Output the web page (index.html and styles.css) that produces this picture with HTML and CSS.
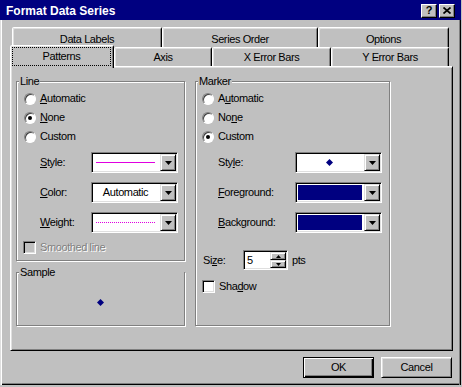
FILE: index.html
```html
<!DOCTYPE html>
<html lang="en">
<head>
    <meta charset="UTF-8">
    <title>Format Data Series</title>
    <link rel="stylesheet" href="styles.css">
</head>
<body>
    <div class="window">
        <div class="titlebar">
            <span class="title">Format Data Series</span>
            <div class="caption-buttons">
                <span class="cap-btn">?</span>
                <span class="cap-btn">
                    <svg width="8" height="7" viewBox="0 0 8 7"><path d="M0.5 0.5L7.5 6.5M7.5 0.5L0.5 6.5" stroke="#000" stroke-width="1.7"/></svg>
                </span>
            </div>
        </div>

        <div class="client">
            <div class="tab-row back">
                <div class="tab w-labels">Data Labels</div>
                <div class="tab w-order">Series Order</div>
                <div class="tab w-options">Options</div>
            </div>
            <div class="tab-row front">
                <div class="tab active w-patterns"><span class="focus">Patterns</span></div>
                <div class="tab w-axis">Axis</div>
                <div class="tab w-xerr">X Error Bars</div>
                <div class="tab w-yerr">Y Error Bars</div>
            </div>

            <div class="panel">
                <div class="col">
                    <div class="group line-group">
                        <span class="group-title">Line</span>
                        <div class="radios">
                            <div class="opt"><span class="radio"></span><u>A</u>utomatic</div>
                            <div class="opt"><span class="radio checked"></span><u>N</u>one</div>
                            <div class="opt"><span class="radio"></span>Custom</div>
                        </div>
                        <div class="fields line-fields">
                            <span><u>S</u>tyle:</span>
                            <div class="combo">
                                <div class="field"><span class="solid-line"></span></div>
                                <span class="drop"><svg width="7" height="4" viewBox="0 0 7 4"><path d="M0 0H7L3.5 4Z"/></svg></span>
                            </div>
                            <span><u>C</u>olor:</span>
                            <div class="combo">
                                <div class="field">Automatic</div>
                                <span class="drop"><svg width="7" height="4" viewBox="0 0 7 4"><path d="M0 0H7L3.5 4Z"/></svg></span>
                            </div>
                            <span><u>W</u>eight:</span>
                            <div class="combo">
                                <div class="field"><span class="dot-line"></span></div>
                                <span class="drop"><svg width="7" height="4" viewBox="0 0 7 4"><path d="M0 0H7L3.5 4Z"/></svg></span>
                            </div>
                        </div>
                        <div class="check-row disabled"><span class="check"></span>Smoothed line</div>
                    </div>

                    <div class="group sample-group">
                        <span class="group-title">Sample</span>
                        <div class="sample-area">
                            <svg width="7" height="7" viewBox="0 0 7 7"><path d="M3.5 0L7 3.5L3.5 7L0 3.5Z" fill="#000080"/></svg>
                        </div>
                    </div>
                </div>

                <div class="group marker-group">
                    <span class="group-title">Marker</span>
                    <div class="radios marker-radios">
                        <div class="opt"><span class="radio"></span>A<u>u</u>tomatic</div>
                        <div class="opt"><span class="radio"></span>No<u>n</u>e</div>
                        <div class="opt"><span class="radio checked"></span>Custom</div>
                    </div>
                    <div class="fields marker-fields">
                        <span>Sty<u>l</u>e:</span>
                        <div class="combo">
                            <div class="field">
                                <svg width="7" height="7" viewBox="0 0 7 7"><path d="M3.5 0L7 3.5L3.5 7L0 3.5Z" fill="#000080"/></svg>
                            </div>
                            <span class="drop"><svg width="7" height="4" viewBox="0 0 7 4"><path d="M0 0H7L3.5 4Z"/></svg></span>
                        </div>
                        <span><u>F</u>oreground:</span>
                        <div class="combo">
                            <div class="field"><span class="swatch"></span></div>
                            <span class="drop"><svg width="7" height="4" viewBox="0 0 7 4"><path d="M0 0H7L3.5 4Z"/></svg></span>
                        </div>
                        <span><u>B</u>ackground:</span>
                        <div class="combo">
                            <div class="field"><span class="swatch"></span></div>
                            <span class="drop"><svg width="7" height="4" viewBox="0 0 7 4"><path d="M0 0H7L3.5 4Z"/></svg></span>
                        </div>
                    </div>
                    <div class="size-row">
                        <span class="size-label">Si<u>z</u>e:</span>
                        <div class="spin">
                            <span class="spin-val">5</span>
                            <span class="spin-btns">
                                <span class="spin-btn"><svg width="5" height="3" viewBox="0 0 5 3"><path d="M2.5 0L5 3H0Z"/></svg></span>
                                <span class="spin-btn"><svg width="5" height="3" viewBox="0 0 5 3"><path d="M0 0H5L2.5 3Z"/></svg></span>
                            </span>
                        </div>
                        <span class="pts">pts</span>
                    </div>
                    <div class="check-row shadow-row"><span class="check"></span>Sha<u>d</u>ow</div>
                </div>
            </div>

            <div class="buttons">
                <button class="btn default">OK</button>
                <button class="btn">Cancel</button>
            </div>
        </div>
    </div>
</body>
</html>
```

FILE: styles.css
```css
* {
    box-sizing: border-box;
}
body {
    margin: 0;
    background-color: #c0c0c0;
    font-family: "Liberation Sans", Arial, sans-serif;
    font-size: 11px;
    line-height: 13px;
    letter-spacing: -0.4px;
    color: #000;
}
u {
    text-decoration-thickness: 1px;
    text-underline-offset: 1px;
}
.window {
    width: 461px;
    height: 385px;
    display: flex;
    flex-direction: column;
}
.titlebar {
    height: 20px;
    background-color: #000080;
    color: #fff;
    display: flex;
    align-items: center;
    justify-content: space-between;
    padding: 0 6px 0 6px;
}
.title {
    font-weight: bold;
    font-size: 12px;
    letter-spacing: 0;
    padding-top: 2px;
}
.caption-buttons {
    display: flex;
    gap: 2px;
    padding-top: 1px;
}
.cap-btn {
    width: 16px;
    height: 14px;
    background-color: #c0c0c0;
    color: #000;
    border: 1px solid;
    border-color: #fff #000 #000 #fff;
    box-shadow: inset -1px -1px #808080;
    display: flex;
    align-items: center;
    justify-content: center;
    font-weight: bold;
    font-size: 11px;
    letter-spacing: 0;
}
.client {
    flex: 1;
    padding: 7px 0 0 10px;
    box-shadow: inset 1px 0 #dfdfdf, inset 2px 0 #fff, inset -1px 0 #000, inset -2px 0 #808080, inset 0 -1px #000, inset 0 -2px #808080;
}

/* tabs */
.tab-row {
    display: flex;
    align-items: flex-start;
}
.tab-row.back {
    height: 20px;
    padding-left: 2px;
}
.tab-row.front {
    height: 19px;
}
.tab {
    border: 1px solid;
    border-bottom: 0;
    border-color: #fff #000 transparent #fff;
    border-radius: 2px 2px 0 0;
    box-shadow: inset 1px 1px #dfdfdf, inset -1px 0 #808080;
    text-align: center;
    background-color: #c0c0c0;
}
.back .tab {
    height: 20px;
    padding-top: 5px;
}
.front .tab {
    height: 19px;
    padding-top: 3px;
}
.front .tab.active {
    height: 23px;
    margin-top: -2px;
    padding: 1px 2px 2px 1px;
    position: relative;
    z-index: 1;
}
.focus {
    display: block;
    border: 1px dotted #000;
    padding: 2px 0;
}
.w-labels { width: 150px; }
.w-order { width: 156px; }
.w-options { width: 131px; }
.w-patterns { width: 104px; }
.w-axis { width: 98px; }
.w-xerr { width: 119px; }
.w-yerr { width: 118px; }

/* property sheet */
.panel {
    width: 443px;
    height: 285px;
    border: 1px solid;
    border-color: #fff #000 #000 #fff;
    box-shadow: inset 1px 1px #dfdfdf, inset -1px -1px #808080;
    padding: 14px 0 0 5px;
    display: flex;
    align-items: flex-start;
    gap: 10px;
}
.col {
    width: 169px;
}
.group {
    border: 1px solid #808080;
    box-shadow: inset 1px 1px #fff, 1px 1px #fff;
}
.group-title {
    display: table;
    margin: -7px 0 0 2px;
    padding: 0 1px;
    background-color: #c0c0c0;
}
.line-group {
    height: 180px;
}
.sample-group {
    height: 54px;
    margin-top: 11px;
    display: flex;
    flex-direction: column;
}
.sample-area {
    flex: 1;
    display: flex;
    align-items: center;
    justify-content: center;
    padding: 0 1px 0 0;
}
.marker-group {
    width: 195px;
    height: 245px;
}

.radios {
    margin-top: 1px;
    padding-left: 7px;
}
.marker-radios {
    padding-left: 6px;
}
.opt {
    height: 19px;
    display: flex;
    align-items: center;
}
.radio {
    width: 12px;
    height: 12px;
    margin-right: 4px;
    border-radius: 50%;
    background-color: #fff;
    border: 1px solid;
    border-color: #808080 #fff #fff #808080;
    box-shadow: inset 1px 1px #404040;
    display: flex;
    align-items: center;
    justify-content: center;
}
.radio.checked::after {
    content: "";
    width: 4px;
    height: 4px;
    border-radius: 50%;
    background-color: #000;
}

.fields {
    display: grid;
    row-gap: 9px;
    margin-top: 6px;
    align-items: center;
}
.line-fields {
    grid-template-columns: 51px 87px;
    padding-left: 23px;
}
.marker-fields {
    grid-template-columns: 77px 87px;
    padding-left: 22px;
}
.combo {
    height: 21px;
    display: flex;
    background-color: #fff;
    border: 1px solid;
    border-color: #808080 #fff #fff #808080;
    box-shadow: inset 1px 1px #000, inset -1px -1px #dfdfdf;
    padding: 1px;
}
.field {
    flex: 1;
    display: flex;
    align-items: center;
    justify-content: center;
    padding-right: 2px;
}
.drop {
    width: 16px;
    height: 17px;
    background-color: #c0c0c0;
    border: 1px solid;
    border-color: #dfdfdf #000 #000 #dfdfdf;
    box-shadow: inset 1px 1px #fff, inset -1px -1px #808080;
    display: flex;
    align-items: center;
    justify-content: center;
}
.solid-line {
    width: 59px;
    height: 1px;
    background-color: #e000e0;
}
.dot-line {
    width: 59px;
    height: 1px;
    background-image: linear-gradient(to right, #e000e0 50%, transparent 50%);
    background-size: 2px 1px;
}
.swatch {
    flex: 1;
    align-self: stretch;
    margin: 1px 0 1px 1px;
    background-color: #000080;
}

.check-row {
    height: 13px;
    display: flex;
    align-items: center;
    margin-top: 8px;
    padding-left: 6px;
}
.check {
    width: 13px;
    height: 13px;
    margin-right: 4px;
    background-color: #fff;
    border: 1px solid;
    border-color: #808080 #fff #fff #808080;
    box-shadow: inset 1px 1px #000, inset -1px -1px #dfdfdf;
}
.disabled {
    color: #808080;
    text-shadow: 1px 1px #fff;
}
.disabled .check {
    background-color: #c0c0c0;
}

.size-row {
    display: flex;
    align-items: center;
    margin-top: 17px;
    padding-left: 7px;
}
.size-label {
    width: 40px;
}
.spin {
    width: 45px;
    height: 20px;
    display: flex;
    background-color: #fff;
    border: 1px solid;
    border-color: #808080 #fff #fff #808080;
    box-shadow: inset 1px 1px #000, inset -1px -1px #dfdfdf;
    padding: 1px;
}
.spin-val {
    flex: 1;
    padding: 2px 0 0 2px;
}
.spin-btns {
    width: 16px;
    display: flex;
    flex-direction: column;
}
.spin-btn {
    flex: 1;
    background-color: #c0c0c0;
    border: 1px solid;
    border-color: #dfdfdf #000 #000 #dfdfdf;
    box-shadow: inset 1px 1px #fff, inset -1px -1px #808080;
    display: flex;
    align-items: center;
    justify-content: center;
}
.pts {
    margin-left: 4px;
}
.shadow-row {
    margin-top: 10px;
}

.buttons {
    display: flex;
    justify-content: flex-end;
    gap: 7px;
    margin-top: 6px;
    padding-right: 9px;
}
.btn {
    width: 71px;
    height: 21px;
    padding: 0;
    font: inherit;
    letter-spacing: inherit;
    color: #000;
    background-color: #c0c0c0;
    border: 1px solid;
    border-color: #fff #000 #000 #fff;
    box-shadow: inset 1px 1px #dfdfdf, inset -1px -1px #808080;
}
.btn.default {
    border-color: #000;
    box-shadow: inset 1px 1px #fff, inset -1px -1px #000, inset -2px -2px #808080;
}
```
